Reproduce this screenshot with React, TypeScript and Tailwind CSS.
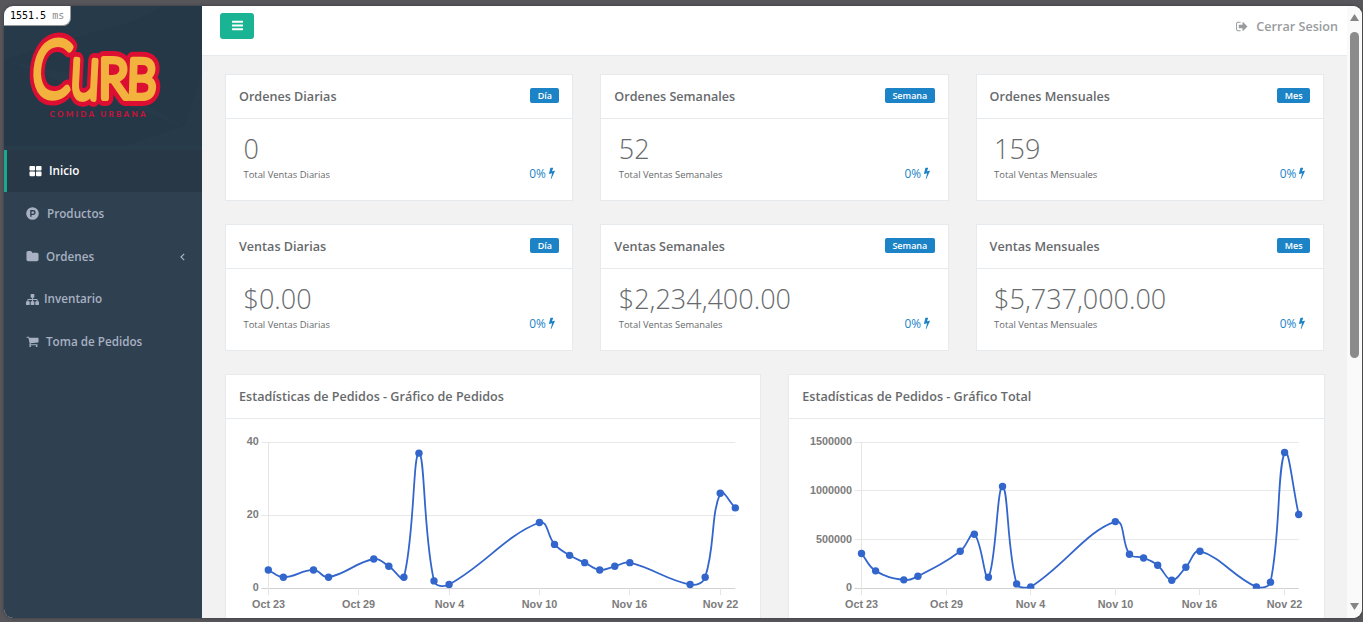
import React from "react";

const ICONS = {
  large:
    "M832 1024v384q0 52-38 90t-90 38h-512q-52 0-90-38t-38-90v-384q0-52 38-90t90-38h512q52 0 90 38t38 90zm0-768v384q0 52-38 90t-90 38h-512q-52 0-90-38t-38-90v-384q0-52 38-90t90-38h512q52 0 90 38t38 90zm896 768v384q0 52-38 90t-90 38h-512q-52 0-90-38t-38-90v-384q0-52 38-90t90-38h512q52 0 90 38t38 90zm0-768v384q0 52-38 90t-90 38h-512q-52 0-90-38t-38-90v-384q0-52 38-90t90-38h512q52 0 90 38t38 90z",
  folder:
    "M1728 608v704q0 92-66 158t-158 66h-1216q-92 0-158-66t-66-158v-960q0-92 66-158t158-66h320q92 0 158 66t66 158v32h672q92 0 158 66t66 158z",
  sitemap:
    "M1792 1248v320q0 40-28 68t-68 28h-320q-40 0-68-28t-28-68v-320q0-40 28-68t68-28h96v-192h-512v192h96q40 0 68 28t28 68v320q0 40-28 68t-68 28h-320q-40 0-68-28t-28-68v-320q0-40 28-68t68-28h96v-192h-512v192h96q40 0 68 28t28 68v320q0 40-28 68t-68 28h-320q-40 0-68-28t-28-68v-320q0-40 28-68t68-28h96v-192q0-52 38-90t90-38h512v-192h-96q-40 0-68-28t-28-68v-320q0-40 28-68t68-28h320q40 0 68 28t28 68v320q0 40-28 68t-68 28h-96v192h512q52 0 90 38t38 90v192h96q40 0 68 28t28 68z",
  cart:
    "M704 1536q0 52-38 90t-90 38-90-38-38-90 38-90 90-38 90 38 38 90zm896 0q0 52-38 90t-90 38-90-38-38-90 38-90 90-38 90 38 38 90zm128-1088v512q0 24-16.5 42.5t-40.5 21.5l-1044 122q13 60 13 70 0 16-24 64h920q26 0 45 19t19 45-19 45-45 19h-1024q-26 0-45-19t-19-45q0-11 8-31.5t16-36 21.5-40 15.5-29.5l-177-823h-204q-26 0-45-19t-19-45 19-45 45-19h256q16 0 28.5 6.5t19.5 15.5 13 24.5 8 26 5.5 29.5 4.5 26h1201q26 0 45 19t19 45z",
  bolt:
    "M1333 566q18 20 7 44l-540 1157q-13 25-42 25-4 0-14-2-17-5-25.5-19t-4.5-30l197-808-406 101q-4 1-12 1-18 0-31-11-18-15-13-39l201-825q4-14 16-23t28-9h328q19 0 32 12.5t13 29.5q0 8-5 18l-171 463 396-98q8-2 12-2 19 0 34 15z",
  signOut:
    "M640 1440q0 4 1 20t.5 26.5-3 23.5-10 19.5-20.5 6.5h-320q-119 0-203.5-84.5t-84.5-203.5v-704q0-119 84.5-203.5t203.5-84.5h320q13 0 22.5 9.5t9.5 22.5q0 4 1 20t.5 26.5-3 23.5-10 19.5-20.5 6.5h-320q-66 0-113 47t-47 113v704q0 66 47 113t113 47h312l11.5 1 11.5 3 8 5.5 7 9 2 13.5zm928-544q0 26-19 45l-544 544q-19 19-45 19t-45-19-19-45v-288h-448q-26 0-45-19t-19-45v-384q0-26 19-45t45-19h448v-288q0-26 19-45t45-19 45 19l544 544q19 19 19 45z",
  bars:
    "M1664 1344v128q0 26-19 45t-45 19h-1408q-26 0-45-19t-19-45v-128q0-26 19-45t45-19h1408q26 0 45 19t19 45zm0-512v128q0 26-19 45t-45 19h-1408q-26 0-45-19t-19-45v-128q0-26 19-45t45-19h1408q26 0 45 19t19 45zm0-512v128q0 26-19 45t-45 19h-1408q-26 0-45-19t-19-45v-128q0-26 19-45t45-19h1408q26 0 45 19t19 45z",
};

function Icon({ name, className = "size-[13px]", box = "0 0 1792 1792" }: { name: keyof typeof ICONS; className?: string; box?: string }) {
  return (
    <svg viewBox={box} className={`shrink-0 ${className}`} fill="currentColor">
      <path d={ICONS[name]} />
    </svg>
  );
}

function ProductIcon() {
  return (
    <svg viewBox="0 0 12 12" className="size-[13px] shrink-0">
      <circle cx="6" cy="6" r="5.8" fill="currentColor" />
      <path d="M4.5 9V3.5h2.1a1.6 1.6 0 0 1 0 3.3H4.5" fill="none" stroke="#2f4050" strokeWidth="1.3" />
    </svg>
  );
}

function WordmarkLetters() {
  return (
    <>
      <text transform="translate(30 97) skewX(-5) scale(.74 1)" fontSize="79">C</text>
      <text transform="translate(69.5 97.5) rotate(3) scale(.7 1)" fontSize="76">u</text>
      <text transform="translate(98.5 97.5) scale(.9 1)" fontSize="55">R</text>
      <text transform="translate(126.5 97.5) skewX(-2) scale(.86 1)" fontSize="54">B</text>
    </>
  );
}

function Logo() {
  return (
    <svg viewBox="4 6 198 144" className="h-[144px] w-[198px] shrink-0">
      <rect x="4" y="6" width="198" height="144" fill="#263a4a" />
      <path d="M4 60 98 31l34-25h70v84l-18 36-88-48z" fill="#243847" />
      <path d="m98 31 9-25h58l-34 16zM184 126l18-54v68H4v-12l90-4z" fill="#263a4a" />
      <path d="M4 60 94 94l90 32-60 20H4z" fill="#253848" />
      <path d="M4 146h198v4H4z" fill="#283c4b" />
      <g className="font-['Lato']" fontWeight="300" strokeLinejoin="round" strokeLinecap="round">
        <g fill="#dc0f32" stroke="#dc0f32" strokeWidth="16"><WordmarkLetters /></g>
        <g fill="#f3b13d" stroke="#f3b13d" strokeWidth="6.2"><WordmarkLetters /></g>
      </g>
      <text x="49.5" y="116.5" textLength="96" className="font-['Lato']" fontWeight="900" fontSize="8" fill="#c51437">COMIDA URBANA</text>
    </svg>
  );
}

const nav = [
  { label: "Productos", icon: <ProductIcon />, gap: "gap-2" },
  { label: "Ordenes", icon: <Icon name="folder" />, gap: "gap-[7px]", arrow: true },
  { label: "Inventario", icon: <Icon name="sitemap" />, gap: "gap-[5px]" },
  { label: "Toma de Pedidos", icon: <Icon name="cart" />, gap: "gap-[7px]" },
];

function Sidebar() {
  return (
    <aside className="flex w-[198px] shrink-0 flex-col bg-[#2f4050] text-[11.7px] font-semibold text-[#a7b1c2]">
      <Logo />
      <div className="flex h-[42px] items-center gap-[7px] border-l-[3px] border-[#19aa8d] bg-[#293846] pl-[22px] text-white">
        <Icon name="large" />
        <span>Inicio</span>
      </div>
      {nav.map((n) => (
        <div key={n.label} className={`flex h-[42.7px] items-center pt-px pl-[22px] pr-[17px] ${n.gap}`}>
          {n.icon}
          <span>{n.label}</span>
          {n.arrow && (
            <svg viewBox="0 0 5 8" className="ml-auto h-2 w-[5px]" fill="none" stroke="currentColor" strokeWidth="1.2">
              <path d="M4.2.8 1 4l3.2 3.2" />
            </svg>
          )}
        </div>
      ))}
    </aside>
  );
}

function Stat({ title, badge, value, caption }: { title: string; badge: string; value: string; caption: string }) {
  return (
    <section className="h-[127px] border border-[#e7eaec] bg-white">
      <header className="flex h-11 items-center justify-between border-b border-[#e7eaec] px-[13px]">
        <h5 className="pt-px text-[12.6px] font-semibold">{title}</h5>
        <span className="mb-0.5 h-[15px] rounded-[2px] bg-[#1c84c6] px-[7.3px] text-[9px] leading-[15px] font-semibold text-white">{badge}</span>
      </header>
      <div className="px-[17.5px] pt-[13px]">
        <div className="h-[34px] text-[27px] leading-[34px] font-light">{value}</div>
        <div className="flex items-start justify-between">
          <span className="pt-px text-[9.4px] leading-4">{caption}</span>
          <span className="-mt-px flex items-center text-[11.9px] leading-4 font-medium text-[#1c84c6]">
            0%
            <Icon name="bolt" box="448 0 896 1792" className="ml-[3px] h-3 w-1.5" />
          </span>
        </div>
      </div>
    </section>
  );
}

type Pt = { x: number; y: number };

// Cubic spline with 0.4 tension; control points stay inside the plot area.
function spline(p: Pt[], top: number, bottom: number) {
  const clamp = (v: number) => Math.max(top, Math.min(bottom, v));
  const ctl = p.map((c, i) => {
    const a = p[i - 1] || c;
    const b = p[i + 1] || c;
    const d1 = Math.hypot(c.x - a.x, c.y - a.y);
    const d2 = Math.hypot(b.x - c.x, b.y - c.y);
    const f1 = (0.4 * d1) / (d1 + d2);
    const f2 = (0.4 * d2) / (d1 + d2);
    return {
      px: c.x - f1 * (b.x - a.x),
      py: clamp(c.y - f1 * (b.y - a.y)),
      nx: c.x + f2 * (b.x - a.x),
      ny: clamp(c.y + f2 * (b.y - a.y)),
    };
  });
  return p
    .map((c, i) => (i ? `C${ctl[i - 1].nx} ${ctl[i - 1].ny} ${ctl[i].px} ${ctl[i].py} ${c.x} ${c.y}` : `M${c.x} ${c.y}`))
    .join("");
}

const days = [0, 1, 3, 4, 7, 8, 9, 10, 11, 12, 18, 19, 20, 21, 22, 23, 24, 28, 29, 30, 31];
const orders = [5, 3, 5, 3, 8, 6, 3, 37, 2, 1, 18, 12, 9, 7, 5, 6, 7, 1, 3, 26, 22];
const totals = [357, 178, 86, 123, 380, 555, 113, 1045, 44, 13, 684, 349, 311, 236, 82, 216, 380, 13, 62, 1394, 757].map((v) => v * 1000);
const labels = ["Oct 23", "Oct 29", "Nov 4", "Nov 10", "Nov 16", "Nov 22"];

function Chart({ title, values, ticks, left, right, id }: { title: string; values: number[]; ticks: number[]; left: number; right: number; id: string }) {
  const top = 23.2;
  const bottom = 169.2;
  const max = ticks[ticks.length - 1];
  const x = (d: number) => left + ((right - left) * d) / 31;
  const y = (v: number) => bottom - ((bottom - top) * v) / max;
  const pts = days.map((d, i) => ({ x: x(d), y: y(values[i]) }));
  return (
    <section className="h-[290px] border border-[#e7eaec] bg-white">
      <header className="flex h-11 items-center border-b border-[#e7eaec] px-[13px]">
        <h5 className="pt-px text-[12.6px] font-semibold">{title}</h5>
      </header>
      <svg width="534" height="240" className="font-['Liberation_Sans',sans-serif] text-[10.8px] font-bold" fill="#7c7c7c">
        <clipPath id={id}>
          <rect x="0" y="0" width="534" height={bottom + 0.5} />
        </clipPath>
        {ticks.map((t) => (
          <g key={t}>
            <line x1={left - 7} x2={right} y1={Math.floor(y(t)) + 0.5} y2={Math.floor(y(t)) + 0.5} stroke={t ? "#e8e8e8" : "#d2d2d2"} />
            <text x={left - 9.5} y={y(t) + 3} textAnchor="end">{t}</text>
          </g>
        ))}
        {labels.map((l, i) => {
          const tx = Math.floor(x(i * 6)) + 0.5;
          return (
            <g key={l}>
              <line x1={tx} x2={tx} y1={i ? bottom : top} y2={bottom + 7} stroke="#e5e5e5" />
              <text x={tx} y="189" textAnchor="middle">{l}</text>
            </g>
          );
        })}
        <g clipPath={`url(#${id})`}>
          <path d={spline(pts, top, bottom)} fill="none" stroke="#3366cc" strokeWidth="1.8" />
          {pts.map((p) => (
            <circle key={p.x} cx={p.x} cy={p.y} r="3.7" fill="#3366cc" />
          ))}
        </g>
      </svg>
    </section>
  );
}

const stats = [
  { title: "Ordenes Diarias", badge: "Día", value: "0", caption: "Total Ventas Diarias" },
  { title: "Ordenes Semanales", badge: "Semana", value: "52", caption: "Total Ventas Semanales" },
  { title: "Ordenes Mensuales", badge: "Mes", value: "159", caption: "Total Ventas Mensuales" },
  { title: "Ventas Diarias", badge: "Día", value: "$0.00", caption: "Total Ventas Diarias" },
  { title: "Ventas Semanales", badge: "Semana", value: "$2,234,400.00", caption: "Total Ventas Semanales" },
  { title: "Ventas Mensuales", badge: "Mes", value: "$5,737,000.00", caption: "Total Ventas Mensuales" },
];

export default function App() {
  return (
    <div className="h-[622px] w-[1363px] overflow-hidden bg-[#57565b] pt-1.5 pl-1 font-['Open_Sans',sans-serif] text-[#676a6c]">
      <div className="relative flex h-[612px] w-[1358px] overflow-hidden rounded-[9px] bg-[#f2f2f2] shadow-[0_0_3px_#333]">
        <Sidebar />
        <main className="flex w-[1145px] shrink-0 flex-col">
          <div className="flex h-[50px] shrink-0 justify-between border-b border-[#e7eaec] bg-white pr-[9px] pl-[18px]">
            <button className="mt-[7px] flex h-[26px] w-[34px] items-center justify-center rounded-[3px] bg-[#1ab394] pb-px text-white">
              <Icon name="bars" />
            </button>
            <div className="flex h-[42px] items-center gap-[7px] text-[12.6px] font-semibold text-[#999c9e]">
              <Icon name="signOut" className="mb-px size-[13px]" />
              <span>Cerrar Sesion</span>
            </div>
          </div>
          <div className="flex flex-col gap-[23px] pt-[18px] pr-[22.5px] pl-[23px]">
            <div className="mr-[0.6px] grid grid-cols-3 gap-x-[27px] gap-y-[23px]">
              {stats.map((s) => (
                <Stat key={s.title} {...s} />
              ))}
            </div>
            <div className="grid grid-cols-2 gap-[27px]">
              <Chart id="orders-clip" title="Estadísticas de Pedidos - Gráfico de Pedidos" values={orders} ticks={[0, 20, 40]} left={42.3} right={509.3} />
              <Chart id="total-clip" title="Estadísticas de Pedidos - Gráfico Total" values={totals} ticks={[0, 500000, 1000000, 1500000]} left={72.5} right={509.7} />
            </div>
          </div>
        </main>
        <div className="flex w-[15px] shrink-0 flex-col items-center bg-[#fafafa] pt-2 pb-2">
          <svg viewBox="0 0 9 7" className="h-[7px] w-[9px]" fill="#858585"><path d="M4.5 0 9 7H0z" /></svg>
          <div className="mt-[11px] h-[326px] w-[9px] rounded-full bg-[#8b8b8b]" />
          <svg viewBox="0 0 9 7" className="mt-auto h-[7px] w-[9px]" fill="#858585"><path d="M4.5 7 9 0H0z" /></svg>
        </div>
        <div className="absolute top-0 left-0 h-5 w-[67px] rounded-br-[8px] border-r border-b border-[#999] bg-white pl-1.5 font-['DejaVu_Sans_Mono',monospace] text-[10px] leading-[19px] text-black">
          1551.5 <span className="text-[#8c8c8c]">ms</span>
        </div>
      </div>
    </div>
  );
}
